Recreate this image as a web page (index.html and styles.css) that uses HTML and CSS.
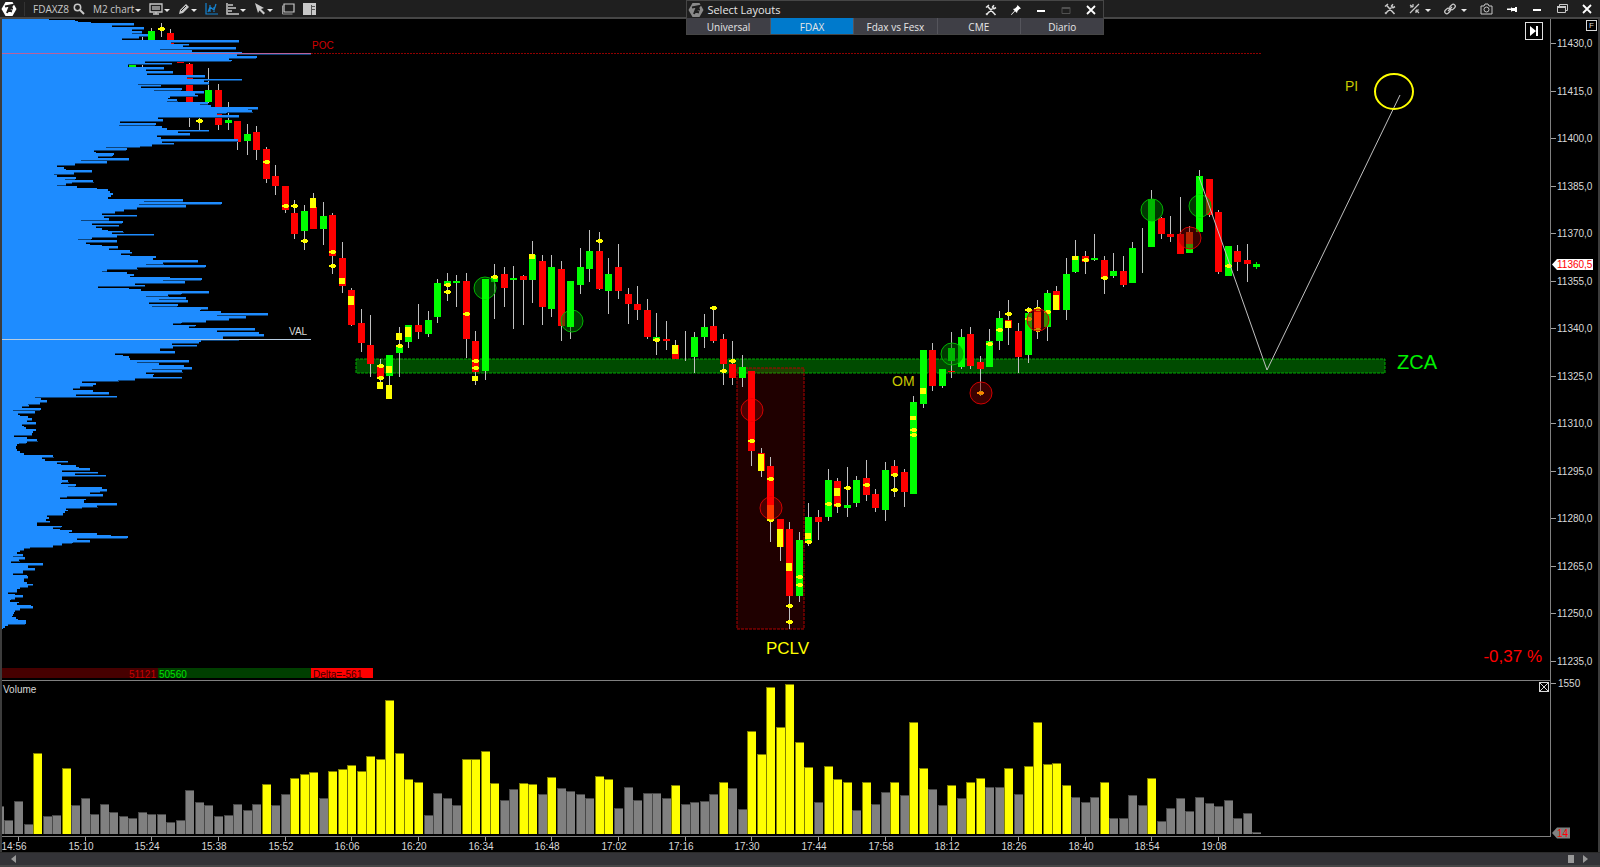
FILE: index.html
```html
<!DOCTYPE html>
<html lang="en">
<head>
<meta charset="utf-8">
<title>FDAXZ8 M2 chart</title>
<link rel="stylesheet" href="styles.css">
</head>
<body>
<svg class="defs" aria-hidden="true">
  <symbol id="logo" viewBox="0 0 16 16"><path fill="currentColor" d="M4.5 1h7L15.5 8l-4 7h-7L.5 8z"/><path class="logo-mark" d="M4 5.5 11.5 4 9 7.5h3M9 4.500 6 12M6.500 8.500 11 10.500"/></symbol>
  <symbol id="tools" viewBox="0 0 12 12"><path fill="none" stroke="currentColor" stroke-width="1.500" d="M1 3.500 4 1M2.500 2.200 10.500 11M1.500 10.500 7.500 4.500M11 3.500 9 4.800 7.500 3 9 1.200M1 9.500 2.500 11"/></symbol>
  <symbol id="pin" viewBox="0 0 12 12"><path fill="currentColor" d="M7.500 1 11 4.500 9.500 5 7.500 7 7 9 5 7.200 1.500 11 1 10.500 4.500 6.700 3 5 5 4.500 7 2.500z"/></symbol>
  <symbol id="minus" viewBox="0 0 12 12"><path fill="currentColor" d="M2 6h8v2H2z"/></symbol>
  <symbol id="close" viewBox="0 0 12 12"><path fill="none" stroke="currentColor" stroke-width="1.800" d="m2 2 8 8M10 2 2 10"/></symbol>
</svg>
<div class="app">
  <header class="bar">
    <div class="left">
      <button class="brand" aria-label="Menu"><svg width="16" height="16"><use href="#logo"/></svg></button>
      <span class="name">FDAXZ8</span>
      <button aria-label="Search"><svg width="12" height="12"><circle cx="4.500" cy="4.500" r="3.200" fill="none" stroke="currentColor" stroke-width="1.500"/><path d="m7 7 4 4" stroke="currentColor" stroke-width="2"/></svg></button>
      <button class="menu">M2 chart</button>
      <button class="menu" aria-label="Display"><svg width="14" height="12"><path fill="none" stroke="currentColor" stroke-width="1.300" d="M1 1h12v8H1zM4 11h6M7 9v2"/><path fill="#8a8a8a" d="M3 3h8v4H3z"/></svg></button>
      <button class="menu" aria-label="Draw"><svg width="12" height="12"><path fill="currentColor" d="m1 11 1-4 6-6 3 3-6 6z"/><path stroke="#1f1f1f" d="m3 8 5-5"/></svg></button>
      <button class="active" aria-label="Indicators"><svg width="13" height="12"><path fill="none" stroke="currentColor" stroke-width="1.200" d="M1 0v11h12M3 9l2-5 4 3 2-6M5 2v7M9 4v5"/></svg></button>
      <button class="menu" aria-label="Profile"><svg width="13" height="12"><path fill="none" stroke="currentColor" stroke-width="1.500" d="M1 0v11h12M2 2h5M2 5h8M2 8h4"/></svg></button>
      <button class="menu" aria-label="Pointer"><svg width="12" height="12"><path fill="currentColor" d="m1 0 9 5-3 1 4 4-1.500 1.500-4-4L4 10z"/></svg></button>
      <button aria-label="Windows"><svg width="14" height="12"><path fill="none" stroke="currentColor" stroke-width="1.200" d="M3 1h10v8H3z"/><path fill="none" stroke="#999" d="M1.500 3v8h10M3 3H1"/></svg></button>
      <button aria-label="Panel"><svg width="14" height="12"><path fill="currentColor" d="M0 0h13v12H0z"/><path stroke="#555" d="M8.500 2v10M9 3.500h3M9 6.500h3"/></svg></button>
    </div>
    <div class="right">
      <button aria-label="Settings"><svg width="12" height="12"><use href="#tools"/></svg></button>
      <button class="menu" aria-label="Crosshair"><svg width="11" height="11"><path fill="none" stroke="currentColor" stroke-width="1.200" d="m1 10 9-9M1 2l3 2M4 4V1M4 4H1M7 7l3 3M7 7v3M7 7h3"/></svg></button>
      <button class="menu" aria-label="Link"><svg width="12" height="12"><g fill="none" stroke="currentColor" stroke-width="1.300"><rect x="0.500" y="6" width="6" height="4" rx="2" transform="rotate(-45 3.500 8)"/><rect x="5.500" y="2" width="6" height="4" rx="2" transform="rotate(-45 8.500 4)"/><path d="m4 8 4-4"/></g></svg></button>
      <button aria-label="Snapshot"><svg width="13" height="12"><path fill="none" stroke="currentColor" d="M1 3h3l1-2h3l1 2h3v8H1z"/><circle cx="6.500" cy="6.500" r="2.500" fill="none" stroke="currentColor"/></svg></button>
      <button class="lit" aria-label="Pin"><svg width="12" height="12"><path fill="currentColor" d="M1 5.500h4V5l1-1v1h3V4h2v5H9V8H6v1L5 8V7H1z"/></svg></button>
      <button class="lit" aria-label="Minimize"><svg width="12" height="12"><use href="#minus"/></svg></button>
      <button aria-label="Restore"><svg width="12" height="12"><path fill="none" stroke="currentColor" d="M3.500 3V1.500h8v6H10M1.500 4.500h8v5h-8z"/><path fill="currentColor" d="M1 3h9v2H1z"/></svg></button>
      <button class="lit" aria-label="Close"><svg width="12" height="12"><use href="#close"/></svg></button>
    </div>
  </header>

  <main class="chart">
    <section class="price" aria-label="Price">
      <svg class="plot">
        <g transform="translate(-2 -19)">
          <rect class="zone" x="356" y="359" width="1029" height="14"/>
          <rect class="box" x="737" y="368" width="67" height="261"/>
          <line class="poc-ext" x1="311" y1="53.500" x2="1261" y2="53.500"/>
          <g id="candles" shape-rendering="crispEdges"></g>
          <g id="profile" shape-rendering="crispEdges"></g>
          <rect class="poc" x="2" y="53" width="309" height="1"/>
          <rect class="val" x="2" y="339" width="309" height="1"/>
          <g id="signals"></g>
          <path class="trend" d="M1199 177 1267 370 1400 95"/>
          <ellipse class="target" cx="1394" cy="91.500" rx="19" ry="17.500"/>
          <text class="small red" x="312" y="49">POC</text>
          <text class="small" x="289" y="335">VAL</text>
          <text class="mid" x="1345" y="91">PI</text>
          <text class="mid" x="892" y="386">OM</text>
          <text class="big" x="766" y="654">PCLV</text>
          <text class="zca" x="1397" y="369">ZCA</text>
          <rect fill="#460000" x="2" y="668" width="156" height="10"/>
          <rect fill="#003f00" x="158" y="668" width="153" height="10"/>
          <rect fill="#ff0000" x="311" y="668" width="62" height="10"/>
          <text class="small ask" x="156" y="678" text-anchor="end">51121</text>
          <text class="small bid" x="159" y="678">50560</text>
          <text class="small delta" x="313" y="678">Delta=-561</text>
        </g>
      </svg>
      <button class="latest" aria-label="Go to latest"><svg width="12" height="12"><path fill="currentColor" d="M2 1v10l6-5zM8 1h2v10H8z"/></svg></button>
      <output class="change">-0,37 %</output>
    </section>
    <aside class="scale"><svg class="plot"><g transform="translate(-1551 -19)" id="prices"></g></svg><button class="fix" aria-label="Fixed scale">F</button></aside>
    <section class="volume" aria-label="Volume">
      <svg class="plot"><g id="volume" transform="translate(-2 -681)"></g></svg>
      <h2>Volume</h2>
      <button class="shut" aria-label="Close volume"><svg width="8" height="8"><path stroke="currentColor" d="m0 0 8 8M8 0 0 8"/></svg></button>
    </section>
    <aside class="scale"><svg class="plot spill"><g transform="translate(-1551 -681)">
      <path class="tick" d="M1551 683.500h5"/><text class="num" x="1558" y="687">1550</text>
      <path fill="#808080" d="m1552 833 5-5.500h13v11h-13z"/><text class="num last" x="1557" y="837">14</text>
    </g></svg></aside>
    <div class="times"><svg class="plot"><g id="times" transform="translate(-2 -837)"></g></svg></div>
  </main>

  <footer class="scroll">
    <button aria-label="Scroll left"><svg width="8" height="8"><path fill="currentColor" d="M6 0v8L1 4z"/></svg></button>
    <div class="ends">
      <button aria-label="Thumb"><svg width="8" height="8"><path fill="currentColor" d="M1 0h6v8H1z"/></svg></button>
      <button aria-label="Scroll right"><svg width="8" height="8"><path fill="currentColor" d="M2 0v8l5-4z"/></svg></button>
    </div>
  </footer>

  <section class="layouts" aria-label="Select Layouts">
    <div class="layouts-title">
      <svg class="dim" width="16" height="16"><use href="#logo"/></svg>
      <h1>Select Layouts</h1>
      <button aria-label="Settings"><svg width="12" height="12"><use href="#tools"/></svg></button>
      <button class="lit" aria-label="Pin"><svg width="12" height="12"><use href="#pin"/></svg></button>
      <button class="lit" aria-label="Minimize"><svg width="12" height="12"><use href="#minus"/></svg></button>
      <button class="off" aria-label="Maximize" disabled><svg width="12" height="12"><path fill="none" stroke="currentColor" d="M2 3.500h8v6H2zM2 4.500h8"/></svg></button>
      <button class="lit" aria-label="Close"><svg width="12" height="12"><use href="#close"/></svg></button>
    </div>
    <nav class="tabs">
      <button>Universal</button><button class="on">FDAX</button><button>Fdax vs Fesx</button><button>CME</button><button>Diario</button>
    </nav>
  </section>
</div>
<script src="chart.js"></script>
</body>
</html>
```

FILE: styles.css
```css
* { box-sizing: border-box; }
body { margin: 0; background: #000; color: #d8d8d8; font-family: "Liberation Sans", Arial, sans-serif; }
button { display: flex; align-items: center; justify-content: center; margin: 0; padding: 0; border: 0; background: none; color: inherit; font: inherit; }
svg { display: block; flex: none; }
.defs { position: absolute; width: 0; height: 0; }
.app { position: relative; display: flex; flex-direction: column; min-height: 100vh; }

.bar { display: flex; justify-content: space-between; height: 19px; border-bottom: 2px solid #464646; background: #1f1f1f; color: #c8c8c8; font: 10px "Open Sans", "Noto Sans", sans-serif; }
.left, .right { display: flex; align-items: center; }
.left { gap: 8px; }
.right { gap: 13px; padding-right: 7px; }
.brand { width: 25px; height: 14px; padding-left: 1px; justify-content: flex-start; border-right: 1px solid #333; color: #fff; }
.name + button { margin-left: -4px; }
.logo-mark { fill: none; stroke: #1f1f1f; stroke-width: 2; }
.menu { gap: 1px; }
.right .menu { gap: 5px; }
.menu::after { content: ""; border: 3px solid transparent; border-top-color: #e8e8e8; border-bottom: 0; margin-top: 4px; }
.active { color: #1583d1; }
.lit { color: #fff; }

.chart { flex: 1; display: grid; grid-template-columns: 1fr 48px; grid-template-rows: minmax(662px, 1fr) 156px 15px; border: 0 solid #3c3c3c; border-width: 0 2px; }
.plot { position: absolute; width: 100%; height: 100%; overflow: hidden; }
.plot.spill { overflow: visible; }
.price, .volume, .scale, .times { position: relative; }
.price, .volume { border-bottom: 1px solid #808080; }
.scale { border-left: 1px solid #808080; }
.times { grid-column: 1 / -1; }

text { fill: #d8d8d8; }
.small { font-size: 10px; }
.small.red { fill: #d00000; }
.small.ask { fill: #c80000; }
.small.bid { fill: #00e000; }
.small.delta { fill: #400000; }
.mid { font-size: 14px; fill: #c8c800; }
.big { font-size: 17px; fill: #ffff00; }
.zca { font-size: 20px; fill: #00f000; }
.num { font-size: 10px; }
.num.last { fill: #ff0000; }
.tick { stroke: #a0a0a0; }
.zone { fill: #004b00; stroke: #00aa00; stroke-dasharray: 3 1; }
.box { fill: rgba(255, 0, 0, .12); stroke: #b00000; stroke-dasharray: 3 1; }
.poc { fill: #b9629c; }
.poc-ext { stroke: #900000; stroke-dasharray: 2 1; }
.val { fill: #b8cce0; }
.trend { fill: none; stroke: #c0c0c0; }
.target { fill: none; stroke: #ffff00; stroke-width: 2; }
.up { fill: rgba(0, 110, 0, .5); stroke: #00b400; }
.down { fill: rgba(130, 0, 0, .45); stroke: #d00000; }

.latest { position: absolute; top: 3px; right: 7px; width: 18px; height: 18px; border: 1px solid #e0e0e0; color: #fff; }
.change { position: absolute; right: 8px; bottom: 13px; color: #ff0000; font-size: 17px; line-height: 20px; }
.fix { position: absolute; top: 1px; right: 1px; width: 11px; height: 11px; border: 1px solid #d8d8d8; font-size: 8px; line-height: 8px; }
.volume h2 { position: relative; margin: 0; padding: 3px 1px; font-size: 10px; line-height: 12px; font-weight: 400; }
.shut { position: absolute; top: 1px; right: 1px; width: 10px; height: 10px; border: 1px solid #d8d8d8; }

.scroll { display: flex; justify-content: space-between; align-items: center; height: 15px; padding: 0 11px 0 10px; background: #333337; border-top: 1px solid #2a2a2a; border-bottom: 2px solid #464646; color: #999; }
.ends { display: flex; gap: 6px; }

.layouts { position: absolute; top: 0; left: 42.9%; width: 418px; border: 1px solid #464646; background: #1f1f1f; color: #e6e6e6; font: 10px "Open Sans", "Noto Sans", sans-serif; }
.layouts-title { display: flex; align-items: center; gap: 13px; height: 17px; padding: 0 6px 0 1px; }
.layouts-title h1 { flex: 1; margin: 0 0 0 -10px; font-size: 11px; line-height: 16px; font-weight: 400; }
.dim { color: #8a8a8a; }
.off { color: #505050; }
.tabs { display: grid; grid-template-columns: repeat(5, 1fr); gap: 1px; background: #55555c; }
.tabs button { height: 16px; padding-top: 1px; background: #3f3f46; }
.tabs .on { background: #007acc; }
```

FILE: chart.js
```js
const NS = "http://www.w3.org/2000/svg";
const X0 = 18, STEP = 9.524;
const G = "#00ff00", R = "#ff0000";
const xAt = i => Math.round(X0 + STEP * i);

function add(parent, tag, attrs, text) {
  const el = document.createElementNS(NS, tag);
  for (const key in attrs) el.setAttribute(key, attrs[key]);
  if (text !== undefined) el.textContent = text;
  parent.appendChild(el);
}
const box = (p, x, y, width, height, fill) => add(p, "rect", { x, y, width, height, fill });

// index, colour, body top, body bottom, wick top, wick bottom, marks (y or [top, bottom])
const candles = [
  [12,G,64,68,64,68],[13,G,0,0,37,67],[14,G,31,41,28,41],[15,G,0,0,23,37,29],[16,R,33,50,29,51],[17,R,61,63,49,63],
  [18,R,64,104,63,127],[19,G,103,105,103,132,121],[20,G,90,102,68,103],[21,R,90,125,84,130],[22,G,120,123,102,130],
  [23,R,121,142,121,150],[24,G,134,141,124,155],[25,R,132,150,126,160],[26,R,149,179,147,183,162],[27,R,176,186,165,195],
  [28,R,186,210,186,213,206],[29,R,213,234,200,239,206],[30,G,211,231,205,250,241],[31,R,207,229,193,229,[198,208]],
  [32,G,216,229,202,245],[33,R,215,256,213,274,252,266],[34,R,258,286,242,293,[278,284]],[35,R,290,325,288,326,[296,305]],
  [36,R,323,343,309,352],[37,R,345,364,315,377],[38,R,366,377,359,389,366,378,[382,389]],[39,G,355,376,355,399,[366,373],[385,399]],
  [40,G,346,353,327,377,[333,340],346],[41,G,325,342,325,348,[327,337]],[42,R,325,332,304,339],[43,G,320,334,311,337],
  [44,G,283,317,279,323],[45,G,281,284,273,301,285,292],[46,G,281,283,275,307],[47,R,281,339,273,358,314],
  [48,R,341,372,331,385,361,368,[376,381]],[49,G,279,371,279,380],[50,G,276,282,264,319,277],[51,R,274,288,267,307],
  [52,G,278,280,266,329],[53,R,276,280,275,325],[54,G,255,280,241,303,[254,259]],[55,R,261,307,255,325],
  [56,G,267,309,255,317],[57,R,269,326,261,341],[58,G,281,327,281,339],[59,G,267,285,248,294],[60,G,251,269,230,282],
  [61,R,251,289,232,290,241],[62,G,274,291,258,314],[63,R,267,291,244,299],[64,R,294,304,288,324],[65,R,304,310,286,320],
  [66,R,310,337,299,339],[67,G,337,340,313,355,340],[68,R,339,341,321,350],[69,R,345,359,340,359,[345,354]],[70,G,0,0,331,361],
  [71,G,337,357,332,373],[72,G,327,337,314,348],[73,R,326,341,306,343,308],[74,R,339,364,334,385,371],[75,R,364,378,341,385,361],
  [76,G,367,378,355,387],[77,R,371,451,371,466,441],[78,R,453,471,448,477,[454,471]],[79,R,466,521,457,542,479,520],
  [80,R,519,547,519,561,[529,547]],[81,R,529,596,522,629,[563,571],606,622],[82,G,540,596,532,602,577,585],
  [83,G,517,543,503,546,[533,539],542],[84,R,517,522,510,540],[85,G,480,517,469,521,504],[86,R,481,507,478,513,[488,496],505],
  [87,G,505,508,467,517,488],[88,G,480,503,476,507],[89,R,478,495,460,501,485],[90,R,494,508,489,512],[91,G,470,510,462,521],
  [92,R,466,475,460,497,475,490],[93,R,472,492,469,507],[94,G,402,494,396,494,[416,420],430,435],[95,G,350,404,350,408,[388,394]],
  [96,R,350,386,343,391],[97,G,369,386,369,388],[98,G,348,361,332,378],[99,G,337,367,329,369],[100,R,334,366,327,369],
  [101,R,362,369,356,396,393],[102,G,341,367,329,367,344],[103,G,318,341,311,350,330],[104,R,320,328,300,345,314,[321,328]],
  [105,R,331,357,323,373],[106,G,313,355,307,363,310,319],[107,R,308,331,300,339,309,330],[108,G,293,327,290,341,312],
  [109,R,291,310,286,310,[295,310]],[110,G,274,310,258,320],[111,G,256,272,240,273,[256,260]],[112,R,256,262,251,274,260],
  [113,G,258,260,234,261],[114,R,260,277,256,294,278],[115,G,271,276,253,278],[116,R,271,285,256,287],[117,G,248,283,242,283],
  [118,G,0,0,228,273],[119,G,199,247,190,247],[120,R,218,234,217,239],[121,R,234,237,216,242],[122,R,234,254,197,254],
  [123,G,232,253,226,253],[124,G,176,232,170,232],[125,R,179,215,179,217],[126,R,212,272,210,274],[127,G,246,276,246,276,266],
  [128,R,251,262,245,271],[129,R,260,264,244,282],[130,G,264,267,262,269]
];
const cg = document.getElementById("candles");
for (const [i, color, top, bottom, high, low, ...marks] of candles) {
  const x = xAt(i);
  box(cg, x, high, 1, low - high, i === 130 ? G : "#c0c0c0");
  if (bottom) box(cg, x - 3, top, 7, bottom - top, color);
  for (const m of marks) {
    if (Array.isArray(m)) box(cg, x - 3, m[0], 6, m[1] - m[0], "#ffff00");
    else {
      box(cg, x - 3, m - 1, 7, 2, "#ffff00");
      box(cg, x - 1, m - 2, 4, 4, "#ffff00");
    }
  }
}

// volume-at-price rows as y:x pairs, in thirds of a pixel below each section's start
const sections = [
  [0, "56:147 59:225 62:233 65:272 74:402 78:335 84:432 90:395 95:426 100:396 105:444 112:417 117:365 122:717 128:512 133:567 138:550 143:707 148:480 153:575 157:727 160:933 165:712 170:770 176:688 181:695 186:436 190:515 196:383 204:492 210:438 217:518 223:440 228:615 233:560 238:727 244:612 250:627 254:413 257:484 261:424 266:545 271:463 276:612 281:585 286:594 292:510 296:505 300:532 304:500 308:625 313:600 318:633 323:775 328:745 333:757 338:680 342:652 348:717 354:475 361:490 366:360 372:467 377:358 381:485 386:500 391:627 396:535 404:570 408:470 413:483 419:713 425:485 430:522 434:455 439:420 442:317 447:380 452:283 457:287 462:342 467:338 471:295 476:387 481:243 487:320 492:225 497:170 503:192 508:198 514:277 519:222 523:163 529:170 533:227 538:196 543:280 548:215 552:198 556:170 561:232 565:290 570:323 576:330 582:340 588:333 594:325 599:550 604:432 608:665 613:418 619:557 624:410 629:372 635:345 641:307"],
  [200, "46:410 51:312 56:327 61:242 66:368 71:277 76:357 81:287 87:305 90:323 95:370 99:335 103:462 108:350 113:275 118:235 124:352 129:258 134:270 136:307 141:355 146:327 152:390 157:395 161:363 166:390 171:467 176:460 181:595 188:490 193:437 199:617 205:412 210:320 214:305 218:380 224:402 229:390 232:510 237:605 241:490 246:555 251:405 256:435 261:294 266:387 270:422 276:627 281:545 285:505 289:437 294:557 298:477 303:564 309:447 314:533 319:457 323:624 328:602 332:600 336:662 341:805 346:652 351:737 357:687 362:617 367:545 371:520 376:587 381:568 388:765 394:652 399:777 404:792 409:670 414:668 418:715 423:602 427:597 431:515 436:592 441:520 447:480 451:480 457:525 461:345 466:370 472:387 477:390 483:567 488:412 492:477 497:552 503:577 508:457 513:547 519:437 524:463 528:460 532:547 537:405 542:355 546:245 551:287 556:280 560:240 566:220 572:279 578:327 584:229 589:352 593:105 597:122 603:140 609:120 612:85 617:87 621:65 627:122 631:40 636:105 641:55 646:60 650:85 656:95 661:80 669:107 674:65 680:72 684:78"],
  [430, "0:107 5:100 10:97 18:42 23:80 31:112 37:80 40:58 45:50 52:47 60:50 66:60 71:72 78:160 84:125 89:135 94:203 99:170 103:182 107:227 112:237 118:270 122:185 127:295 131:226 136:318 142:185 148:187 152:205 158:185 161:183 165:227 170:205 174:305 179:320 184:300 188:270 194:308 199:200 203:180 208:257 214:252 221:351 227:292 232:245 236:197 241:205 246:195 252:190 257:142 264:147 269:138 274:150 279:112 284:110 289:185 294:160 298:180 303:217 307:207 312:290 316:333 322:383 326:232 332:270 337:218 343:187 349:160 352:90 358:73 363:60 367:50 374:70 379:40 384:75 390:58 396:32 403:130 409:85 416:105 421:70 426:70 431:40 436:80 441:85 447:72 455:72 459:82 464:100 468:85 473:60 478:52 483:52 489:25 493:45 498:70 504:45 508:32 513:30 517:57 521:50 526:93 532:100 537:60 543:45 550:43 556:38 560:35 563:47 568:55 572:77 580:77 583:25 590:15 595:10 600:6"]
];
const rows = sections.flatMap(([start, data]) => data.split(" ").map(pair => {
  const [y, x] = pair.split(":").map(Number);
  return [start + y / 3, x / 3];
}));
const pg = document.getElementById("profile");
let from = 19;
rows.forEach(([y, x], n) => {
  const next = rows[n + 1] || [y + 1, 2];
  const to = Math.max(from + 1, Math.round((y + next[0]) / 2));
  box(pg, 2, from, Math.round(x) - 2, to - from, "#1e8cff");
  if (x - next[1] > 4) box(pg, Math.round(next[1]), to, Math.round(x - next[1]), 1, "#0d437a");
  from = to;
});

const sg = document.getElementById("signals");
box(sg, xAt(79) - 3, 505, 7, 14, "#ff3800");
box(sg, xAt(123) - 3, 232, 7, 12, "#e04000");
box(sg, xAt(98) - 3, 371, 7, 1, R);
[[485,288,"up"],[572,321,"up"],[752,410,"down"],[771,508,"down"],[952,354,"up"],[981,393,"down"],[1038,320,"down"],[1152,210,"up"],[1190,238,"down"],[1200,206,"up"]]
  .forEach(([cx, cy, c]) => add(sg, "circle", { cx, cy, r: 11, class: c }));
// bodies that stay bright inside their signal circle
[[49,279,299,G],[58,309,327,G],[77,399,421,R],[79,497,505,R],[79,505,519,"#ff3800"],[101,392,394,"#ff8000"],[107,312,328,"#ff3000"],[124,195,217,G]]
  .forEach(([i, a, b, c]) => box(sg, xAt(i) - 3, a, 7, b - a, c));

const heights = [28,14,33,10,81,18,19,66,29,36,20,30,22,18,16,22,20,20,12,14,44,32,29,18,19,30,24,30,50,29,40,56,60,62,36,63,65,69,63,78,75,134,81,55,52,19,41,36,29,75,75,83,51,34,45,51,50,40,57,46,43,40,36,58,55,26,47,34,41,41,36,49,30,32,33,40,52,46,25,103,80,147,107,150,92,67,32,68,55,52,24,52,30,42,52,39,112,66,45,29,49,36,52,56,47,47,66,40,68,112,70,71,49,37,32,37,52,16,16,39,29,56,13,26,36,23,37,31,28,34,16,21,2];
const vg = document.getElementById("volume");
heights.forEach((h, n) => {
  const x = xAt(n - 2), big = h >= 49;
  box(vg, x - 4, 834 - h, 9, h, big ? "#808000" : "#484848");
  box(vg, x - 3, 835 - h, 8, h - 1, big ? "#ffff00" : "#808080");
});

const tg = document.getElementById("times");
for (let n = 0; n <= 18; n++) {
  const minutes = 14 * 60 + 56 + 14 * n;
  const label = Math.floor(minutes / 60) + ":" + String(minutes % 60).padStart(2, "0");
  const x = xAt(n * 7);
  add(tg, "path", { class: "tick", d: `M${x + .5} 837v4` });
  add(tg, "text", { class: "num", x: x - 4, y: 850, "text-anchor": "middle" }, label);
}

const ag = document.getElementById("prices");
for (let n = 0; n < 14; n++) {
  const y = Math.round(44 + n * 47.5);
  add(ag, "path", { class: "tick", d: `M1551 ${y - .5}h5` });
  add(ag, "text", { class: "num", x: 1557, y: y + 3 }, (11430 - 15 * n) + ",0");
}
add(ag, "path", { fill: "#ffffff", d: "m1552 264.500 5-5.500h36v11h-36z" });
add(ag, "text", { class: "num last", x: 1557, y: 268 }, "11360,5");
```
